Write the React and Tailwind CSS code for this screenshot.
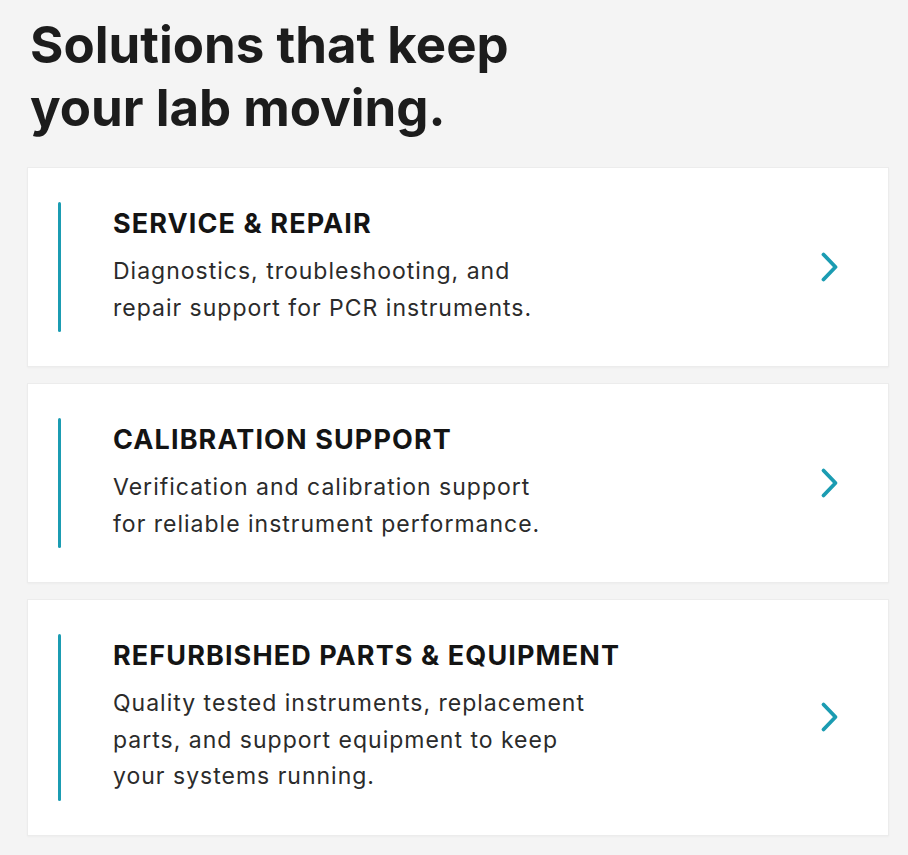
const services = [
  {
    title: "SERVICE & REPAIR",
    lines: ["Diagnostics, troubleshooting, and", "repair support for PCR instruments."],
  },
  {
    title: "CALIBRATION SUPPORT",
    lines: ["Verification and calibration support", "for reliable instrument performance."],
  },
  {
    title: "REFURBISHED PARTS & EQUIPMENT",
    lines: [
      "Quality tested instruments, replacement",
      "parts, and support equipment to keep",
      "your systems running.",
    ],
  },
];

const Chevron = () => (
  <svg width="20" height="32" viewBox="0 0 20 32" fill="none" className="shrink-0 text-[#1b9cb2]">
    <path
      d="M3.5 3.5 L15.5 16 L3.5 28.5"
      stroke="currentColor"
      strokeWidth="3.8"
      strokeLinecap="round"
      strokeLinejoin="round"
    />
  </svg>
);

const ServiceCard = ({ title, lines }) => (
  <a
    href="#"
    className="flex items-center bg-white border border-[#ececec] shadow-[0_1px_2px_rgba(0,0,0,0.03)] pl-[30px] pr-[48px] py-[34px]"
  >
    <div className="flex flex-1 items-stretch">
      <span className="w-[3px] rounded-full bg-[#1b9cb2]" />
      <div className="pl-[52px] py-[6px]">
        <h3 className="text-[27px] leading-[32px] font-bold tracking-[1.1px] text-[#141414]">
          {title}
        </h3>
        <p className="mt-[13px] text-[23px] leading-[36.5px] tracking-[1px] text-[#2b2b2b]">
          {lines.map((line) => (
            <span key={line} className="block">
              {line}
            </span>
          ))}
        </p>
      </div>
    </div>
    <Chevron />
  </a>
);

export default function App() {
  return (
    <div className="min-h-[855px] bg-[#f4f4f4] pl-[27px] pr-[19px] pt-[13px] pb-[20px] font-['Inter',sans-serif]">
      <h2 className="pl-[3px] text-[51px] leading-[63px] font-bold text-[#1c1c1c]">
        Solutions that keep
        <br />
        your lab moving.
      </h2>
      <div className="mt-[28px] flex flex-col gap-[16px]">
        {services.map((s) => (
          <ServiceCard key={s.title} {...s} />
        ))}
      </div>
    </div>
  );
}
